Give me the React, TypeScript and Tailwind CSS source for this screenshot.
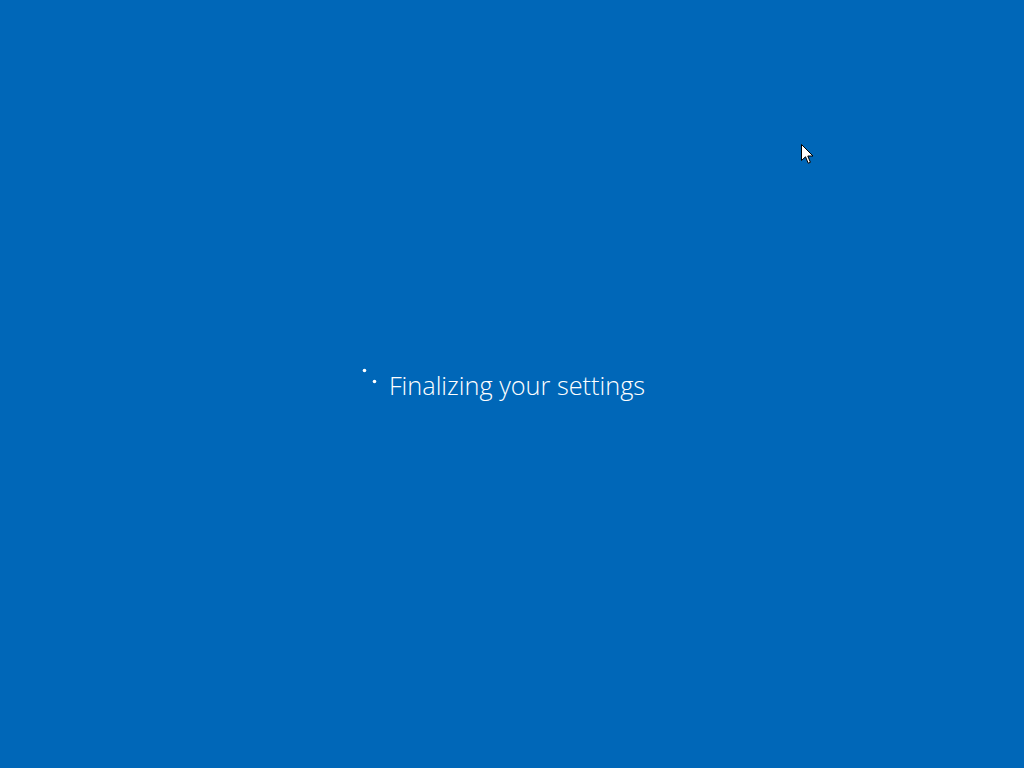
import * as React from "react";

const Spinner: React.FC = () => (
  <svg width="22" height="40" viewBox="0 0 22 40" className="shrink-0">
    <circle cx="2.5" cy="5.5" r="1.8" fill="#fff" />
    <circle cx="12.5" cy="16.5" r="1.8" fill="#fff" />
  </svg>
);

const Cursor: React.FC = () => (
  <svg className="absolute left-[801px] top-[144px]" width="13" height="21" viewBox="0 0 13 21">
    <path
      d="M0.5 0.5 L0.5 16.5 L4.5 12.8 L7.2 19.2 L9.4 18.3 L6.8 12 L12 12 Z"
      fill="#fff"
      stroke="#000"
      strokeWidth="1"
      strokeLinejoin="miter"
    />
  </svg>
);

export default function App() {
  return (
    <div className="relative flex h-[768px] w-[1024px] items-center justify-center overflow-hidden bg-[#0067b8]">
      <div className="flex items-center gap-[5px] pr-[17px] pt-[2px]">
        <Spinner />
        <span className="whitespace-nowrap font-['Open_Sans',sans-serif] text-[25.3px] font-light leading-[34px] text-white">
          Finalizing your settings
        </span>
      </div>
      <Cursor />
    </div>
  );
}
